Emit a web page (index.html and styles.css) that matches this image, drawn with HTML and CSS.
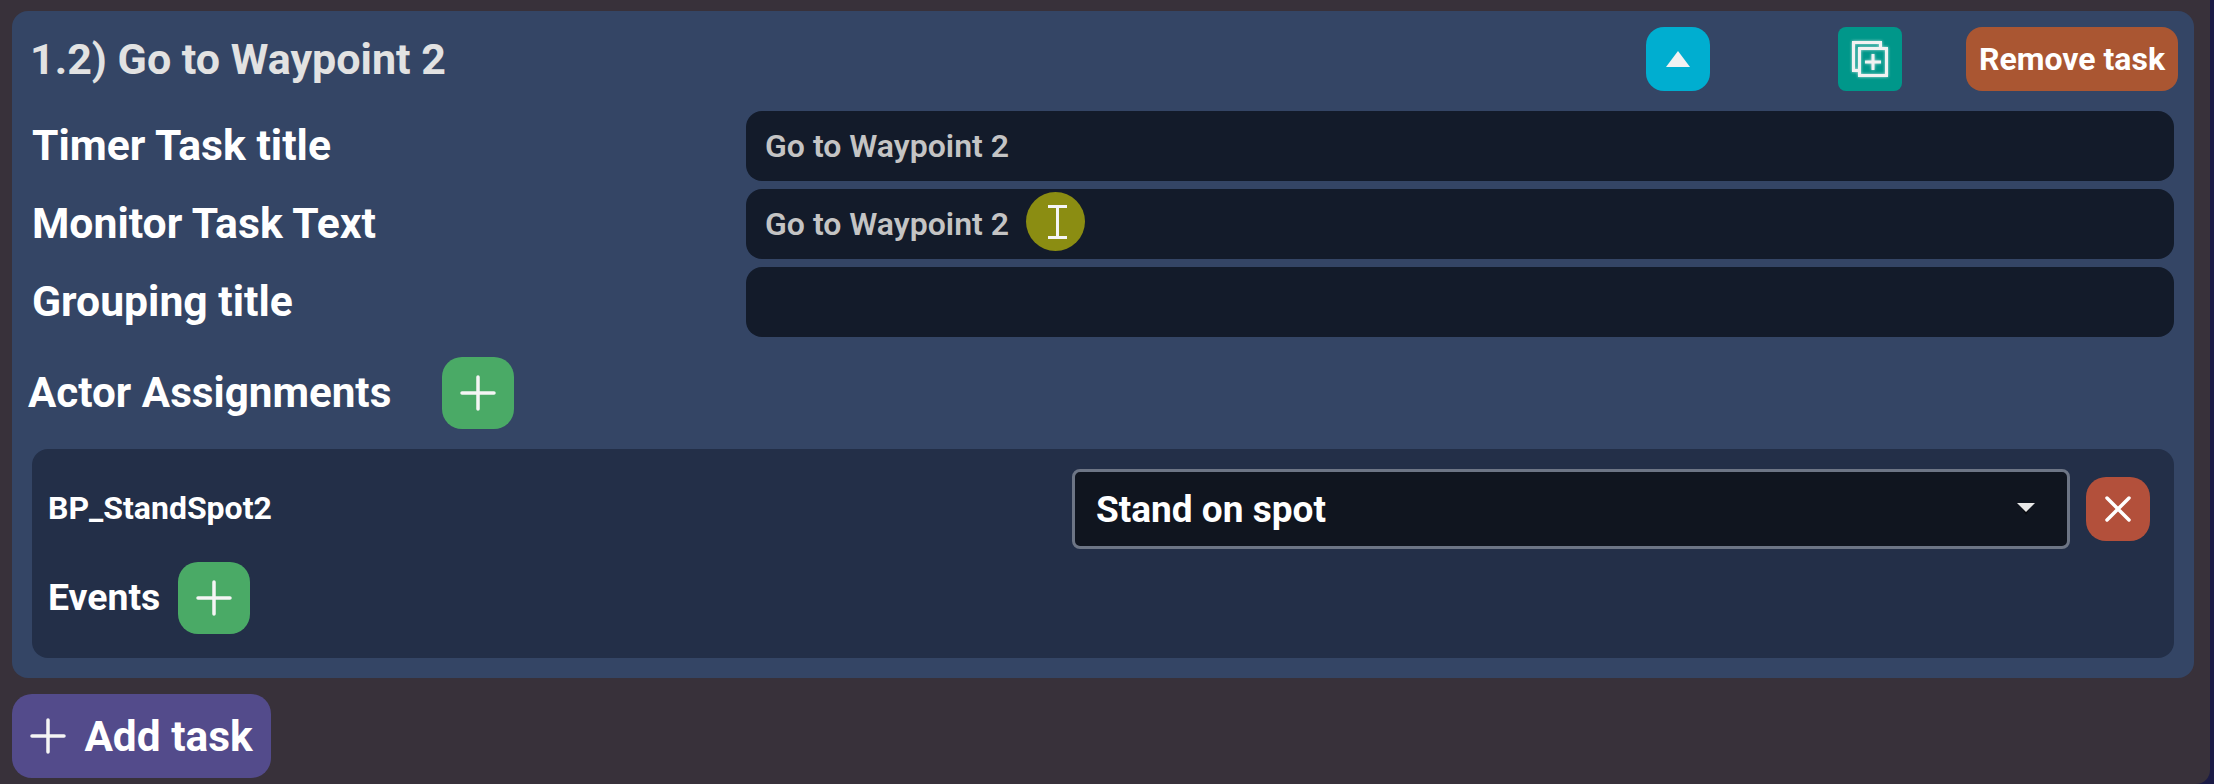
FILE: index.html
```html
<!DOCTYPE html>
<html lang="en">
<head>
    <meta charset="UTF-8">
    <title>Task editor</title>
    <link rel="stylesheet" href="styles.css">
</head>
<body>
    <div class="page">
        <section class="task">
            <header class="task-head">
                <h2 class="task-title">1.2) Go to Waypoint 2</h2>
                <button class="btn btn-up" type="button">
                    <svg width="24" height="16" viewBox="0 0 24 16"><path d="M12 0L24 16H0Z" fill="#f2f2f2"/></svg>
                </button>
                <button class="btn btn-copy" type="button">
                    <svg class="copy-icon" width="36" height="36" viewBox="0 0 36 36" fill="none" stroke="#f2f2f2" stroke-width="3">
                        <path d="M6 29.5H1.5V1.5H28.500V6"/>
                        <rect x="7.500" y="7.500" width="27" height="27"/>
                        <path d="M21 13V29M13 21H29"/>
                    </svg>
                </button>
                <button class="btn btn-remove" type="button">Remove task</button>
            </header>

            <div class="field">
                <label class="field-label">Timer Task title</label>
                <input class="field-input" type="text" value="Go to Waypoint 2">
            </div>
            <div class="field">
                <label class="field-label">Monitor Task Text</label>
                <div class="input-wrap">
                    <input class="field-input" type="text" value="Go to Waypoint 2">
                    <span class="cursor-mark">
                        <svg width="20" height="34" viewBox="0 0 20 34" fill="none" stroke="#f5f5f5" stroke-width="3"><path d="M0 1.5H19M0 32.5H19M9.5 1.5V32.5" /></svg>
                    </span>
                </div>
            </div>
            <div class="field">
                <label class="field-label">Grouping title</label>
                <input class="field-input" type="text">
            </div>

            <div class="actors-head">
                <span class="actors-title">Actor Assignments</span>
                <button class="btn btn-add" type="button">
                    <svg width="36" height="36" viewBox="0 0 36 36" stroke="#f5f5f5" stroke-width="3.5" stroke-linecap="round"><path d="M18 2V34M2 18H34"/></svg>
                </button>
            </div>

            <div class="actor">
                <div class="actor-row">
                    <span class="actor-name">BP_StandSpot2</span>
                    <div class="select">
                        <span>Stand on spot</span>
                        <svg class="select-arrow" width="18" height="12" viewBox="0 0 18 12"><path d="M5 5H13L9 12Z" fill="#000" opacity="0.6"/><path d="M0 0H18L9 9Z" fill="#e8e8e8"/></svg>
                    </div>
                    <button class="btn btn-delete" type="button">
                        <svg width="26" height="26" viewBox="0 0 26 26" stroke="#fff" stroke-width="3.5" stroke-linecap="round"><path d="M2 2L24 24M24 2L2 24"/></svg>
                    </button>
                </div>
                <div class="events-row">
                    <span class="events-title">Events</span>
                    <button class="btn btn-add" type="button">
                        <svg width="36" height="36" viewBox="0 0 36 36" stroke="#f5f5f5" stroke-width="3.5" stroke-linecap="round"><path d="M18 2V34M2 18H34"/></svg>
                    </button>
                </div>
            </div>
        </section>

        <button class="btn btn-addtask" type="button">
            <svg width="36" height="36" viewBox="0 0 36 36" stroke="#f5f5f5" stroke-width="3.5" stroke-linecap="round"><path d="M18 2V34M2 18H34"/></svg>
            Add task
        </button>
    </div>
</body>
</html>
```

FILE: styles.css
```css
* {
    box-sizing: border-box;
}
html, body {
    height: 100%;
}
body {
    margin: 0;
    overflow: hidden;
    background-color: #1b1b45;
    font-family: Roboto, sans-serif;
    color: #fff;
}
.page {
    width: 2210px;
    height: 100%;
    padding: 11px 16px 0 12px;
    border-bottom-right-radius: 14px;
    background-color: #38313a;
}
.task {
    height: 667px;
    padding: 16px 20px 20px 20px;
    border-radius: 16px;
    background-color: #344565;
}
.task-head {
    display: flex;
    align-items: center;
    height: 64px;
    margin-bottom: 20px;
}
.task-title {
    margin: 0 0 0 -2px;
    flex: 1;
    font-size: 43px;
    font-weight: 700;
    color: #e2e2e2;
}
.btn {
    display: flex;
    align-items: center;
    justify-content: center;
    padding: 0;
    border: none;
    font-family: inherit;
    color: #fff;
}
.btn-up {
    width: 64px;
    height: 64px;
    margin-right: 128px;
    border-radius: 18px;
    background-color: #00aed0;
}
.btn-copy {
    width: 64px;
    height: 64px;
    margin-right: 64px;
    border-radius: 8px;
    background-color: #00978a;
}
.copy-icon {
    filter: drop-shadow(0 0 1.5px rgba(255, 255, 255, 0.7));
}
.btn-remove {
    width: 212px;
    height: 64px;
    margin-right: -4px;
    border-radius: 16px;
    background-color: #aa5632;
    font-size: 32px;
    font-weight: 700;
}
.field {
    display: flex;
    align-items: center;
    height: 70px;
    margin-bottom: 8px;
}
.field-label {
    width: 714px;
    flex: none;
    margin-top: -2px;
    font-size: 42.7px;
    font-weight: 700;
}
.input-wrap {
    position: relative;
    flex: 1;
}
.field-input {
    flex: 1;
    width: 100%;
    height: 70px;
    padding: 0 19px;
    border: none;
    border-radius: 16px;
    background-color: #131b2a;
    font-family: inherit;
    font-size: 32px;
    font-weight: 600;
    color: #c4c4c4;
}
.cursor-mark {
    position: absolute;
    left: 280px;
    top: 3px;
    display: flex;
    align-items: center;
    justify-content: center;
    width: 59px;
    height: 59px;
    padding-left: 5px;
    border-radius: 50%;
    background-color: #8b8d12;
}
.actors-head {
    display: flex;
    align-items: center;
    height: 72px;
    margin-top: 20px;
}
.actors-title {
    width: 414px;
    margin-left: -4px;
    margin-top: -2px;
    font-size: 42.2px;
    font-weight: 700;
}
.btn-add {
    width: 72px;
    height: 72px;
    border-radius: 20px;
    background-color: #4aaa66;
}
.actor {
    height: 209px;
    margin-top: 20px;
    padding: 20px 24px 0 16px;
    border-radius: 16px;
    background-color: #232f48;
}
.actor-row {
    display: flex;
    align-items: center;
    height: 80px;
}
.actor-name {
    width: 1024px;
    margin-top: -2px;
    font-size: 32px;
    font-weight: 700;
}
.select {
    display: flex;
    align-items: center;
    justify-content: space-between;
    width: 998px;
    height: 80px;
    padding: 0 32px 0 21px;
    border: 3px solid #6d7585;
    border-radius: 8px;
    background-color: #10151f;
    font-size: 37px;
    font-weight: 700;
}
.btn-delete {
    width: 64px;
    height: 64px;
    margin-left: 16px;
    border-radius: 20px;
    background-color: #b3503b;
}
.events-row {
    display: flex;
    align-items: center;
    gap: 18px;
    margin-top: 13px;
}
.events-title {
    margin-top: -2px;
    font-size: 37.4px;
    font-weight: 700;
}
.btn-addtask {
    gap: 18px;
    width: 259px;
    height: 84px;
    margin-top: 16px;
    border-radius: 20px;
    background-color: #534b8b;
    font-size: 42.4px;
    font-weight: 700;
}
```
